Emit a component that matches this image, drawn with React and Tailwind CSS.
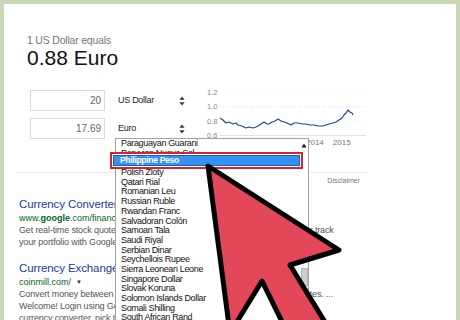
const CURRENCIES = [
  'Paraguayan Guarani',
  'Peruvian Nuevo Sol',
  'Philippine Peso',
  'Polish Zloty',
  'Qatari Rial',
  'Romanian Leu',
  'Russian Ruble',
  'Rwandan Franc',
  'Salvadoran Colón',
  'Samoan Tala',
  'Saudi Riyal',
  'Serbian Dinar',
  'Seychellois Rupee',
  'Sierra Leonean Leone',
  'Singapore Dollar',
  'Slovak Koruna',
  'Solomon Islands Dollar',
  'Somali Shilling',
  'South African Rand',
  'South Korean Won',
]

// курс за ~1.5 года, координаты внутри svg графика
const RATE_POINTS = [
  [0, 32], [3, 34], [6, 37], [9, 36], [13, 38], [16, 37], [18, 39], [22, 40], [26, 42],
  [29, 41], [33, 42], [36, 41], [38, 40], [41, 38], [44, 36], [47, 38], [49, 38], [52, 36],
  [55, 35], [58, 33], [61, 35], [64, 36], [67, 37], [71, 39], [74, 37], [78, 37], [82, 38],
  [86, 38], [90, 39], [94, 39], [98, 40], [103, 40], [106, 39], [109, 38], [113, 37],
  [116, 36], [119, 34], [122, 32], [124, 29], [126, 27], [128, 24], [129, 25], [130, 26],
  [132, 27], [133, 29],
]

function SelectArrows() {
  return (
    <svg width="6" height="10" viewBox="0 0 6 10" className="shrink-0">
      <path d="M3 0.5 L5.6 3.8 L0.4 3.8 Z" fill="#333" />
      <path d="M3 9.5 L5.6 6.2 L0.4 6.2 Z" fill="#333" />
    </svg>
  )
}

function Converter() {
  return (
    <div className="h-[169px] border-b border-[#ebebeb]">
      <div className="pl-[10px] pt-[30px]">
        <div className="text-[10.5px] leading-[13px] tracking-[-0.2px] text-[#777]">1 US Dollar equals</div>
        <div className="text-[21px] leading-[22px] text-[#111]">0.88 Euro</div>
      </div>

      <div className="mt-[21px] flex items-start">
        {/* поля ввода */}
        <div className="ml-[13px] w-[77px] flex flex-col gap-[7px] text-[10px] text-[#666]">
          <div className="h-[21px] border border-[#d9d9d9] pr-[3px] text-right leading-[19px]">20</div>
          <div className="h-[21px] border border-[#d9d9d9] pr-[3px] text-right leading-[19px]">17.69</div>
        </div>

        {/* валюты */}
        <div className="ml-[8px] w-[80px] flex flex-col gap-[7px] text-[9px] tracking-[-0.3px] text-[#222]">
          <div className="h-[21px] flex items-center justify-between pl-[5px] pr-[6px]">
            <span>US Dollar</span>
            <SelectArrows />
          </div>
          <div className="h-[21px] flex items-center justify-between pl-[5px] pr-[6px]">
            <span>Euro</span>
            <SelectArrows />
          </div>
        </div>

        {/* график */}
        <div className="ml-[16px] -mt-[4px] flex">
          <div className="w-[13px] text-[7.5px] leading-[14.3px] text-[#888]">
            <div>1.2</div>
            <div>1.0</div>
            <div>0.8</div>
            <div>0.6</div>
          </div>
          <div>
            <svg width="148" height="52" viewBox="0 0 148 52">
              <line x1="0" y1="7" x2="146" y2="7" stroke="#eeeeee" strokeDasharray="1 2" />
              <line x1="0" y1="21" x2="146" y2="21" stroke="#dddddd" strokeDasharray="1 2" />
              <line x1="0" y1="35" x2="146" y2="35" stroke="#eeeeee" strokeDasharray="1 2" />
              <line x1="0" y1="49.5" x2="146" y2="49.5" stroke="#e3e3e3" />
              <polyline
                points={RATE_POINTS.map((p) => p.join(',')).join(' ')}
                fill="none"
                stroke="#24468c"
                strokeWidth="1.2"
                strokeLinejoin="round"
              />
            </svg>
            <div className="flex gap-[9px] pl-[86px] text-[8px] leading-[10px] text-[#777]">
              <span>2014</span>
              <span>2015</span>
            </div>
          </div>
        </div>
      </div>
    </div>
  )
}

function Results() {
  return (
    <div className="pl-[2px] whitespace-nowrap">
      <div className="mt-[3px] pr-[8px] text-right text-[7px] leading-[10px] text-[#777]">Disclaimer</div>

      <div className="mt-[10px]">
        <div className="text-[11.5px] leading-[16px] tracking-[-0.1px] text-[#1c3c9c]">Currency Converter - Google Finance</div>
        <div className="text-[9px] leading-[12px] text-[#006621]">
          www.<b>google</b>.com/finance/converter
        </div>
        <div className="text-[9px] leading-[12px] tracking-[-0.15px] text-[#545454]">
          Get real-time stock quotes &amp; charts, financial news, currency conversions, or track
        </div>
        <div className="text-[9px] leading-[12px] tracking-[-0.15px] text-[#545454]">
          your portfolio with Google Finance.
        </div>
      </div>

      <div className="mt-[12px]">
        <div className="text-[11.5px] leading-[16px] tracking-[-0.1px] text-[#1c3c9c]">Currency Exchange Rate Conversion Calculator</div>
        <div className="flex items-center gap-[5px] text-[9px] leading-[12px] text-[#006621]">
          <span>coinmill.com/</span>
          <span className="text-[6px] text-[#333]">▼</span>
        </div>
        <div className="text-[9px] leading-[12px] tracking-[-0.15px] text-[#545454]">
          Convert money between any world currencies using all our live exchange rates. ...
        </div>
        <div className="text-[9px] leading-[12px] tracking-[-0.15px] text-[#545454]">
          Welcome! Login using Google to save your settings.
        </div>
        <div className="text-[9px] leading-[12px] tracking-[-0.15px] text-[#545454]">
          currency converter, pick the currencies you need.
        </div>
      </div>
    </div>
  )
}

function Dropdown() {
  return (
    <div className="absolute left-[111px] top-[134px] w-[194px] h-[200px] flex border border-[#a3a3a3] bg-white">
      <div className="flex-1 text-[9px] leading-[9.7px] tracking-[-0.35px] text-[#111]">
        {CURRENCIES.map((c) =>
          c === 'Philippine Peso' ? (
            <div key={c} className="relative h-[9.7px]">
              <div className="absolute -left-[6px] -top-[6px] w-[193px] h-[17px] border-2 border-[#d3232f] bg-white p-[1px]">
                <div className="h-full border border-[#1762c9] bg-[#3592f0] pl-[6px] text-[8.5px] leading-[9px] tracking-[-0.3px] font-bold text-white">
                  {c}
                </div>
              </div>
            </div>
          ) : (
            <div key={c} className="h-[9.7px] pl-[5px]">{c}</div>
          )
        )}
      </div>
      <div className="w-[8px] flex flex-col items-center">
        <svg width="6" height="5" viewBox="0 0 6 5" className="mt-[4px]">
          <path d="M3 0.5 L5.6 4.5 L0.4 4.5 Z" fill="#222" />
        </svg>
        <div className="mt-[120px] w-[7px] h-[18px] bg-[#cdcdcd] border border-[#b5b5b5]" />
      </div>
    </div>
  )
}

function BigArrow() {
  return (
    <svg className="absolute left-0 top-0" width="452" height="316" viewBox="0 0 452 316">
      <polygon
        points="204,162 335,246 286,261 332,336 287,336 258,277 226,329"
        fill="#e2485a"
        stroke="#000"
        strokeWidth="5"
        strokeLinejoin="round"
      />
    </svg>
  )
}

export default function App() {
  return (
    <div className="w-[460px] h-[320px] overflow-hidden bg-[#c8d8b4] pt-[4px] px-[4px] font-['Liberation_Sans',Arial,sans-serif]">
      <div className="relative h-[316px] overflow-hidden bg-white">
        <div className="w-[364px] pl-[13px] overflow-hidden">
          <Converter />
          <Results />
        </div>
        <Dropdown />
        <BigArrow />
      </div>
    </div>
  )
}
